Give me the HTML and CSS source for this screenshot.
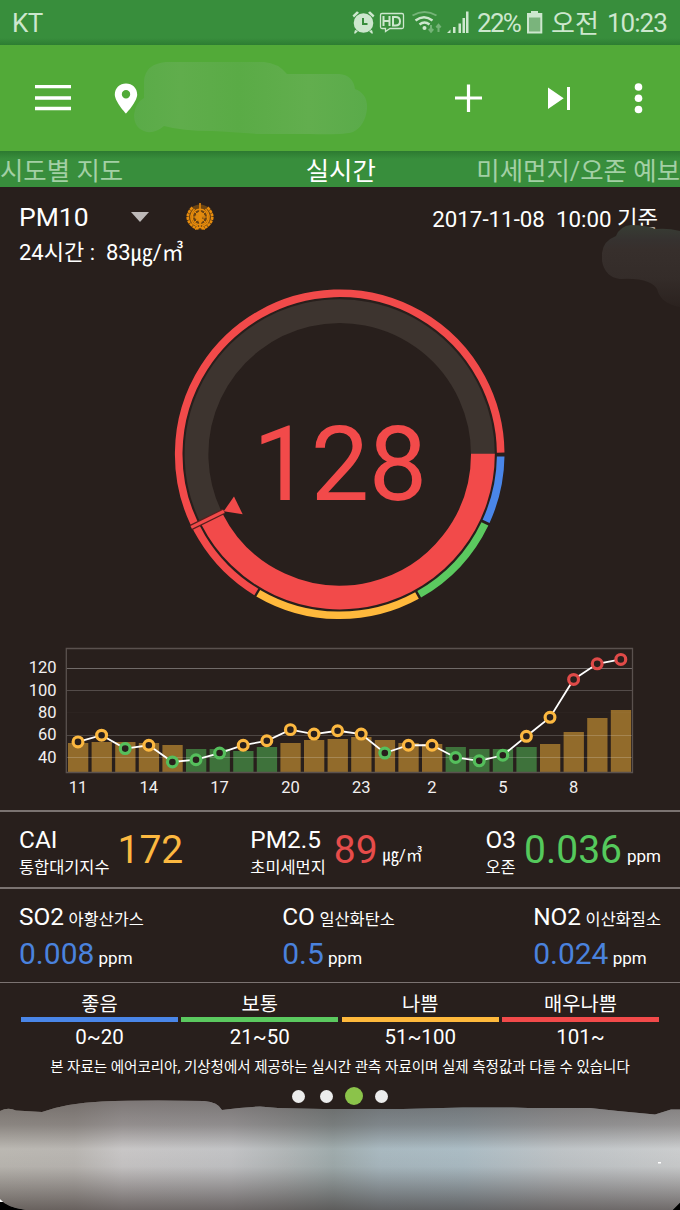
FILE: index.html
```html
<!DOCTYPE html>
<html lang="ko">
<head>
  <meta charset="UTF-8">
  <title>미세먼지</title>
  <link rel="stylesheet" href="styles.css">
</head>
<body>

<div class="app">
  <!-- Status bar -->
  <div class="status-bar">
    <span class="carrier">KT</span>
    <svg class="status-icons" width="118" height="26" viewBox="350 10 118 26">
      <g fill="#cde7ce">
        <circle cx="361.5" cy="23" r="9.8"/>
        <path d="M350.5 15.5l4.5-4.3 2 1.6-5 4.6zM372.500 15.500l-4.500-4.300-2 1.600 5 4.600zM353 30l3 1-2.500 2.500h-1.500zM370 30l-3 1 2.500 2.500h1.500z"/>
        <path d="M445 33l3.500-3.500V33zM451 27h2.500v6H451zM456.500 23.500h2.500v9.500h-2.500zM460.500 18h2.500v15h-2.500zM464 11.500h2.500V33H464z"/>
        <circle cx="422.500" cy="28" r="2"/>
      </g>
      <path d="M361 18v6h4.500" fill="none" stroke="#388e3c" stroke-width="2"/>
      <path d="M380 13.500h20q1.500 0 1.500 1.500v12q0 1.500-1.500 1.500h-12l-4.500 3v-3H380q-1.500 0-1.500-1.500V15q0-1.500 1.500-1.500z" fill="none" stroke="#cde7ce" stroke-width="1.300"/>
      <path d="M381.500 16v10M387.500 16v10M381.500 21h6M391 17v8.500h2.500q4.500 0 4.500-4.250t-4.500-4.250z" fill="none" stroke="#cde7ce" stroke-width="2"/>
      <path d="M413.500 20.500q8.500-6.500 17 0M417.500 24.500q5-4 10 0" fill="none" stroke="#cde7ce" stroke-width="2.400"/>
      <path d="M410.500 15.500q12-7 24 0M429 25v6M436.500 32v-6M426.800 29l2.200 2.700 2.200-2.700M434.300 27.500l2.200-2.700 2.200 2.700" fill="none" stroke="#74b377" stroke-width="2"/>
    </svg>
    <span class="percent">22%</span>
    <svg class="battery" width="16" height="23" viewBox="0 0 16 23">
      <path d="M4 0h7v2h4.300v20.500H0V2h4z" fill="#cde7ce"/>
      <path d="M2 6.500h11.300v14H2z" fill="#7ab47c"/>
    </svg>
    <span class="ampm">오전</span>
    <span class="clock">10:23</span>
  </div>

  <!-- App bar -->
  <div class="app-bar">
    <svg class="icon-menu" width="36" height="26" viewBox="0 0 36 26">
      <path d="M0 1.500h36M0 13h36M0 23.500h36" stroke="#fff" stroke-width="3.400"/>
    </svg>
    <svg class="icon-pin" width="24" height="31" viewBox="0 0 24 31">
      <path fill="#fff" fill-rule="evenodd" d="M12 .500C5.800.500.800 5.200.800 11.400.800 18.500 12 30.500 12 30.500S23.200 18.500 23.200 11.400C23.200 5.200 18.200.500 12 .500zM12 7a4.200 4.200 0 1 1 0 8.400A4.200 4.200 0 0 1 12 7z"/>
    </svg>
    <svg class="place" width="238" height="76" viewBox="132 60 238 76">
      <defs>
        <linearGradient id="placeFill">
          <stop offset="0" stop-color="#5aab48"/>
          <stop offset=".2" stop-color="#60ad4c"/>
          <stop offset=".45" stop-color="#5aab46"/>
          <stop offset=".75" stop-color="#62ae4e"/>
          <stop offset="1" stop-color="#5aab4a"/>
        </linearGradient>
      </defs>
      <path fill="url(#placeFill)" d="M144 81q1-17 22-19h98q14 1 23 12h52q14 1 16 15 13 5 12 20-2 17-14 23-8 3-43 2h-52q-25-2-46-3-30 0-48-5-8 7-17 6-13-3-13-17 1-12 10-17z"/>
    </svg>
    <svg class="actions" width="190" height="32" viewBox="454 82 190 32">
      <path d="M455 98h27M468.500 84.500v27.500" stroke="#fff" stroke-width="3.200"/>
      <path fill="#fff" d="M548 87.500v21.500l15.700-10.700zM567 87h3v23h-3z"/>
      <g fill="#fff"><circle cx="638.500" cy="87" r="3.800"/><circle cx="638.500" cy="98.300" r="3.800"/><circle cx="638.500" cy="109.500" r="3.800"/></g>
    </svg>
  </div>

  <!-- Tabs -->
  <div class="tabs">
    <span class="tab">시도별 지도</span>
    <span class="tab active">실시간</span>
    <span class="tab">미세먼지/오존 예보</span>
  </div>

  <div class="summary">
    <div class="summary-left">
      <div class="pollutant">
        <span>PM10</span>
        <span class="caret"></span>
        <svg class="who" width="28" height="28" viewBox="0 0 28 28" fill="none" stroke="#e88c0c">
          <circle cx="14" cy="14" r="12.500" fill="#6b4413" stroke="none"/>
          <circle cx="14" cy="14" r="7.800" stroke-width="1.400"/>
          <circle cx="14" cy="14" r="4.200" stroke-width="1"/>
          <path d="M6.500 14h15M8.500 8.500l11 11M19.500 8.500l-11 11" stroke-width="1"/>
          <path d="M11 10l3-2 3 2 2 3-3 1 1 4-3 3-2-4-3-2z" fill="#e08a10" stroke="none"/>
          <path d="M14 0v25" stroke-width="1.600"/>
          <path d="M6.500 4.500Q-2 13 4.500 21q3.500 4 8 4.500M21.500 4.500q8.500 8.500 2 16.500-3.500 4-8 4.500" stroke-width="2.600" stroke-dasharray="3 .6"/>
          <path d="M8.500 6Q2 13 7 20.500l5 3M19.500 6q6.500 7 1.500 14.500l-5 3M9 26.300l5-2.300 5 2.300" stroke-width="1.500"/>
        </svg>
      </div>
      <div class="average">24시간 :&nbsp; 83㎍/㎥</div>
    </div>
    <div class="measured">2017-11-08&nbsp; 10:00 기준</div>
    <svg class="station" width="80" height="84" viewBox="600 222 80 84">
      <defs>
        <linearGradient id="stationFill" x2="0" y2="1">
          <stop offset="0" stop-color="#373d34"/>
          <stop offset=".18" stop-color="#363230"/>
          <stop offset=".3" stop-color="#372f2c"/>
          <stop offset=".65" stop-color="#342c29"/>
          <stop offset="1" stop-color="#2b221f"/>
        </linearGradient>
      </defs>
      <path fill="url(#stationFill)" d="M616 235Q620 225 631 224Q645 224 656 228Q668 227 680 230V306Q661 303 657 288Q655 284 648 281Q638 277 620 278Q605 276 602 260V252Q603 240 616 235z"/>
    </svg>
  </div>

  <!-- Gauge -->
  <svg class="gauge" width="340" height="340" viewBox="0 0 340 340">
    <g id="gauge" transform="translate(169.700 169.300)" fill="none"></g>
    <text class="gauge-value" x="169.800" y="214.800" text-anchor="middle">128</text>
  </svg>

  <!-- 24 hour chart -->
  <svg class="chart" id="chart" width="680" height="170" viewBox="0 640 680 170"></svg>

  <div class="row row-main">
    <div class="metric">
      <div class="name">CAI<small>통합대기지수</small></div>
      <span class="value yellow">172</span>
    </div>
    <div class="metric metric-pm25">
      <div class="name">PM2.5<small>초미세먼지</small></div>
      <span class="value red">89</span>
      <span class="unit">㎍/㎥</span>
    </div>
    <div class="metric">
      <div class="name">O3<small>오존</small></div>
      <span class="value green">0.036</span>
      <span class="unit">ppm</span>
    </div>
  </div>

  <div class="row row-sub">
    <div class="gas">
      <div class="gas-name">SO2 <small>아황산가스</small></div>
      <div class="gas-value"><b>0.008</b> ppm</div>
    </div>
    <div class="gas">
      <div class="gas-name">CO <small>일산화탄소</small></div>
      <div class="gas-value"><b>0.5</b> ppm</div>
    </div>
    <div class="gas">
      <div class="gas-name">NO2 <small>이산화질소</small></div>
      <div class="gas-value"><b>0.024</b> ppm</div>
    </div>
  </div>

  <div class="legend">
    <div class="level good"><span>좋음</span><i></i><span class="range">0~20</span></div>
    <div class="level normal"><span>보통</span><i></i><span class="range">21~50</span></div>
    <div class="level bad"><span>나쁨</span><i></i><span class="range">51~100</span></div>
    <div class="level worst"><span>매우나쁨</span><i></i><span class="range">101~</span></div>
  </div>
  <p class="notice">본 자료는 에어코리아, 기상청에서 제공하는 실시간 관측 자료이며 실제 측정값과 다를 수 있습니다</p>

  <div class="pager">
    <span></span><span></span><span class="current"></span><span></span>
  </div>

  <!-- Banner -->
  <svg class="banner" width="680" height="110" viewBox="0 1100 680 110">
    <defs>
      <linearGradient id="bannerFill">
        <stop offset="0" stop-color="#bbb8b2"/>
        <stop offset=".11" stop-color="#b9b6b2"/>
        <stop offset=".18" stop-color="#c8c6c6"/>
        <stop offset=".34" stop-color="#c2c3c5"/>
        <stop offset=".42" stop-color="#b1b6b7"/>
        <stop offset=".49" stop-color="#9fabac"/>
        <stop offset=".56" stop-color="#a9b9c0"/>
        <stop offset=".68" stop-color="#abbcc4"/>
        <stop offset=".82" stop-color="#bec3c6"/>
        <stop offset="1" stop-color="#cbcdce"/>
      </linearGradient>
      <linearGradient id="bannerShade" x2="0" y2="1">
        <stop offset="0" stop-color="#2c2220" stop-opacity=".48"/>
        <stop offset=".22" stop-color="#2c2220" stop-opacity=".34"/>
        <stop offset=".44" stop-color="#2c2220" stop-opacity="0"/>
        <stop offset=".6" stop-color="#2c2220" stop-opacity=".04"/>
        <stop offset="1" stop-color="#2c2220" stop-opacity=".58"/>
      </linearGradient>
      <path id="bannerShape" d="M0 1111q8-4 16-.500l26 1.500q25-9 60-10.500 40-1.500 102-.500 14 1 18 9 20-3 38-3.500l18 1.500 45 1h80l60-1.500h50l15 .500h62l28 3 37 3.500 16-5h9v93l-8 8H32Q8 1209 0 1199z"/>
    </defs>
    <path d="M0 1195h680v15H0z"/>
    <path d="M0 1195h8v7H0z" fill="#fff"/>
    <use href="#bannerShape" fill="url(#bannerFill)"/>
    <use href="#bannerShape" fill="url(#bannerShade)"/>
    <path d="M658 1162h3v1.500h-3z" fill="#fff"/>
  </svg>
</div>

<script>
  const colors = { blue: "#4a86e8", green: "#5bc95f", yellow: "#ffb93c", red: "#f24a4a" };

  function point(r, deg) {
    const a = deg * Math.PI / 180;
    return (r * Math.cos(a)).toFixed(2) + " " + (r * Math.sin(a)).toFixed(2);
  }

  function arc(r, from, to, width, color) {
    const large = to - from > 180 ? 1 : 0;
    return `<path d="M${point(r, from)}A${r} ${r} 0 ${large} 1 ${point(r, to)}" stroke="${color}" stroke-width="${width}"/>`;
  }

  function drawGauge() {
    let html = "";
    html += arc(143.2, 153.5, 360, 23.8, "#3d342f");
    html += arc(143.2, -0.2, 153, 23.8, colors.red);
    html += arc(161, 0.8, 24.6, 7.6, colors.blue);
    html += arc(161, 25.6, 60.4, 7.6, colors.green);
    html += arc(161, 61.3, 120.4, 7.6, colors.yellow);
    html += arc(161, 121.2, 359.4, 7.6, colors.red);
    // needle
    html += `<path d="M${point(129, 153.8)}L${point(165.5, 153.8)}" stroke="#5a1f1e" stroke-width="5.6"/>`;
    html += `<path d="M${point(129, 153.8)}L${point(165.5, 153.8)}" stroke="${colors.red}" stroke-width="3.2"/>`;
    html += `<path d="M-105.700 42.300L-97 60L-116 57z" fill="${colors.red}"/>`;
    document.getElementById("gauge").innerHTML = html;
  }

  // hourly PM10 line and PM2.5 bars
  const pm10 = [54, 60, 48, 51, 36, 38, 44, 51, 55, 65, 61, 64, 61, 44, 51, 51, 40, 37, 42, 59, 76, 110, 124, 128];
  const barTop = [743, 742, 742, 743, 745, 749, 749, 751, 747, 743, 740, 739, 737, 740, 743, 744, 747, 749, 749, 747, 744, 732, 718, 710];
  const greenBars = [5, 6, 7, 8, 16, 17, 18, 19];

  function levelColor(v) {
    if (v > 100) return "#e04a48";
    return v > 50 ? "#fcb840" : "#55bf5c";
  }

  function drawChart() {
    const x = i => 78 + i * 23.6;
    const y = v => 668.3 + (120 - v) * 1.115;
    let html = "";
    barTop.forEach((top, i) => {
      const fill = greenBars.includes(i) ? "#3e723b" : "#926b2b";
      html += `<rect x="${(68 + i * 23.6).toFixed(1)}" y="${top}" width="20.3" height="${772 - top}" fill="${fill}"/>`;
    });
    [[120, .34], [100, .2], [80, .02], [60, .18], [40, .2]].forEach(([v, o]) => {
      html += `<path d="M66 ${Math.floor(y(v)) + .5}H632" stroke="#fff" stroke-opacity="${o}"/>`;
      html += `<text class="axis" x="56.500" y="${y(v) + 5}" text-anchor="end">${v}</text>`;
    });
    html += `<path d="M66.300 648.500H632.500V772.500H66.300z" fill="none" stroke="#5a514e" stroke-width="1.300"/>`;
    html += `<polyline fill="none" stroke="#fff" stroke-width="1.800" points="${pm10.map((v, i) => x(i) + "," + y(v)).join(" ")}"/>`;
    pm10.forEach((v, i) => {
      html += `<circle cx="${x(i)}" cy="${y(v)}" r="4.900" fill="#281f1c" stroke="${levelColor(v)}" stroke-width="3.2"/>`;
    });
    [11, 14, 17, 20, 23, 2, 5, 8].forEach((h, i) => {
      html += `<text class="axis" x="${x(i * 3)}" y="792.500" text-anchor="middle">${h}</text>`;
    });
    document.getElementById("chart").innerHTML = html;
  }

  drawGauge();
  drawChart();
</script>

</body>
</html>
```
FILE: styles.css
```css
body {
  margin: 0;
  background: #281f1c;
  color: #fff;
  font-family: Roboto, "Noto Sans CJK KR", sans-serif;
}

svg {
  display: block;
  flex: none;
}

.app {
  position: relative;
  width: 680px;
  height: 1210px;
  overflow: hidden;
}

/* Status bar */
.status-bar {
  display: flex;
  align-items: center;
  box-sizing: border-box;
  height: 45px;
  padding: 3px 12px 0 12px;
  background: linear-gradient(#388e3c 38px, #2d7d32);
  color: #cde7ce;
  font-size: 26px;
  white-space: nowrap;
}

.carrier {
  flex: 1;
  line-height: 42px;
  padding-bottom: 3px;
  letter-spacing: -.5px;
}

.status-icons {
  margin-top: -3px;
}

.percent {
  width: 45px;
  margin-left: 7px;
  padding-bottom: 2px;
  letter-spacing: -1.7px;
}

.battery {
  margin: -3px 8px 0 5px;
}

.ampm {
  width: 49px;
  padding-bottom: 6px;
}

.clock {
  width: 61px;
  margin-left: 7px;
  padding-bottom: 2px;
  letter-spacing: -1px;
}

/* App bar */
.app-bar {
  display: flex;
  align-items: center;
  box-sizing: border-box;
  height: 106px;
  padding-left: 35px;
  background: #52aa38;
}

.icon-pin {
  margin-left: 43px;
}

.place {
  margin-left: -6px;
}

.actions {
  margin-left: 84px;
}

/* Tabs */
.tabs {
  display: flex;
  justify-content: space-between;
  height: 36px;
  background: linear-gradient(#2c7a30, #388e3c 8px);
  font-size: 25.4px;
  line-height: 40px;
  white-space: nowrap;
}

.tab {
  color: #a3d0a5;
}

.tab.active {
  margin-left: 82px;
  color: #fff;
}

/* Summary */
.summary {
  position: relative;
  display: flex;
  justify-content: space-between;
  height: 70px;
  padding: 12px 22px 0 18px;
}

.pollutant {
  display: flex;
  align-items: center;
  height: 35px;
  padding: 0 0 1px 1px;
  font-size: 26.5px;
  line-height: 34px;
}

.caret {
  margin-left: 42px;
  border: 9.5px solid transparent;
  border-top: 10px solid #bdb9b8;
  border-bottom: 0;
}

.who {
  margin-left: 37px;
}

.average {
  padding-left: 1px;
  font-size: 22px;
  line-height: 35px;
}

.measured {
  font-size: 22.3px;
  line-height: 40px;
}

.station {
  position: absolute;
  top: 36px;
  right: 0;
}

.gauge {
  margin: 16px auto 15px;
}

.gauge-value {
  fill: #f24a4a;
  font-size: 104px;
  letter-spacing: -.5px;
}

.axis {
  fill: #f2f0f0;
  font-size: 16.5px;
}

/* Metrics */
.row {
  display: flex;
  justify-content: space-between;
  box-sizing: border-box;
  padding: 0 19px;
  border-top: 2px solid #7b7371;
}

.row-main {
  height: 77px;
}

.metric {
  display: flex;
}

.metric-pm25 {
  padding-left: 4px;
}

.metric-pm25 .unit {
  font-size: 16.5px;
}

.name {
  padding-top: 13px;
  font-size: 24.4px;
  line-height: 30px;
}

.name small {
  display: block;
  font-size: 16.4px;
  line-height: 25px;
}

.value {
  margin-left: 8px;
  font-size: 39px;
  line-height: 77px;
}

.unit {
  margin-left: 5px;
  font-size: 17px;
  line-height: 88px;
}

.yellow { color: #fcb840; }
.red { color: #e64c4a; }
.green { color: #55c95c; }

.row-sub {
  height: 95px;
}

.gas-name {
  padding-top: 10px;
  font-size: 24.4px;
  line-height: 36px;
  word-spacing: -1.5px;
}

.gas-name small {
  font-size: 16.4px;
}

.gas-value {
  font-size: 17px;
  line-height: 32px;
}

.gas-value b {
  color: #4a82dd;
  font-size: 30px;
  font-weight: normal;
}

/* Legend */
.legend {
  display: flex;
  gap: 3.4px;
  padding: 9px 21px 0;
  border-top: 1px solid #7b7371;
}

.level {
  flex: 1;
  text-align: center;
  font-size: 19.8px;
  line-height: 25px;
}

.level span {
  display: block;
}

.level i {
  display: block;
  height: 5px;
}

.level .range {
  font-size: 20.5px;
  line-height: 30px;
}

.good i { background: #4a86e8; }
.normal i { background: #5bc95f; }
.bad i { background: #ffb93c; }
.worst i { background: #f24a4a; }

.notice {
  margin: 4px 0 0;
  text-align: center;
  font-size: 14.5px;
  line-height: 24px;
  white-space: nowrap;
}

.pager {
  display: flex;
  align-items: center;
  justify-content: center;
  gap: 14.6px;
  height: 20px;
  margin-top: 6px;
}

.pager span {
  width: 13px;
  height: 13px;
  border-radius: 50%;
  background: #ececec;
}

.pager .current {
  width: 18px;
  height: 18px;
  margin: 0 -2.5px;
  background: #8bc34a;
}

.banner {
  position: absolute;
  left: 0;
  bottom: 0;
}
```
